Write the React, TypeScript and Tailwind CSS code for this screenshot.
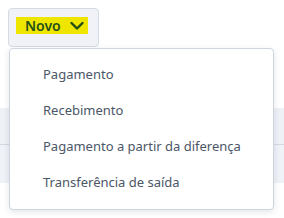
const ITEMS = [
  "Pagamento",
  "Recebimento",
  "Pagamento a partir da diferença",
  "Transferência de saída",
];

function ChevronDown() {
  return (
    <svg width="16" height="10" viewBox="0 0 16 10" fill="none">
      <polyline
        points="2.5 2 8 7.5 13.5 2"
        stroke="#1f4d12"
        strokeWidth="2.4"
        strokeLinecap="round"
        strokeLinejoin="round"
      />
    </svg>
  );
}

export default function App() {
  return (
    <div
      className="relative h-[218px] w-[284px] overflow-hidden bg-white"
      style={{ fontFamily: '"Noto Sans", "Open Sans", sans-serif' }}
    >
      {/* page behind the menu */}
      <div className="pt-[108px]">
        <div className="h-[37px] border-b border-[#d3d9e2] bg-[#eef1f6]" />
        <div className="h-[38px] bg-[#eff2f7]" />
      </div>

      <div className="absolute left-[8px] top-[8px] flex h-[39px] w-[91px] items-start rounded-[4px] border border-[#d5dbe5] bg-[#f0f2f7] pl-[7px] pt-[8px]">
        <span className="flex h-[17px] w-[72px] items-center gap-[8px] bg-[#efe600] pl-[9px] text-[14px] font-semibold leading-none text-[#23501a]">
          Novo
          <ChevronDown />
        </span>
      </div>

      <div className="absolute left-[9px] top-[48px] w-[265px] rounded-[4px] border border-[#cfd5df] bg-white pt-[8px] pb-[8px] shadow-[0_2px_6px_rgba(30,45,70,0.12)]">
        {ITEMS.map((t) => (
          <div
            key={t}
            className="flex h-[36px] items-center pl-[33px] text-[13px] text-[#4b5667]"
          >
            {t}
          </div>
        ))}
      </div>
    </div>
  );
}
